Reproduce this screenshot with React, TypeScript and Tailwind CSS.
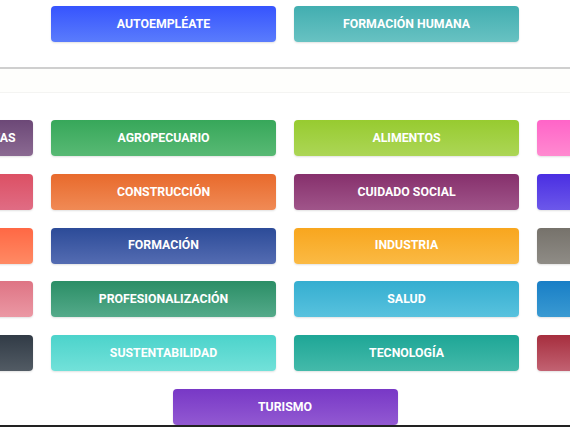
import React from "react";

type Btn = { label: string; from: string; to: string };

const Button = ({ b }: { b: Btn }) => (
  <div
    className="w-[225px] h-[36px] shrink-0 rounded-[4px] flex items-center justify-center text-white font-bold text-[12.3px] uppercase whitespace-nowrap shadow-[0_1px_2px_rgba(0,0,0,0.12)]"
    style={{ backgroundImage: `linear-gradient(to bottom, ${b.from}, ${b.to})` }}
  >
    {b.label}
  </div>
);

const rows: Btn[][] = [
  [
    { label: "ARTES E INDUSTRIAS CREATIVAS", from: "#6c4877", to: "#8b6a92" },
    { label: "AGROPECUARIO", from: "#37a75a", to: "#58b974" },
    { label: "ALIMENTOS", from: "#97cb30", to: "#acd656" },
    { label: "ARTESANÍAS", from: "#ff64c8", to: "#ff8ad0" },
  ],
  [
    { label: "COMERCIO", from: "#dc5064", to: "#e06c84" },
    { label: "CONSTRUCCIÓN", from: "#e86a2c", to: "#f08a55" },
    { label: "CUIDADO SOCIAL", from: "#86306c", to: "#a0558a" },
    { label: "DIGITAL", from: "#4a2ee2", to: "#6c58ea" },
  ],
  [
    { label: "EMPRENDIMIENTO", from: "#ff6844", to: "#ff8a64" },
    { label: "FORMACIÓN", from: "#2c4b98", to: "#546cb2" },
    { label: "INDUSTRIA", from: "#f8a61e", to: "#fbba44" },
    { label: "OFICIOS", from: "#76726b", to: "#8f8c86" },
  ],
  [
    { label: "IDIOMAS", from: "#de7484", to: "#eb98a4" },
    { label: "PROFESIONALIZACIÓN", from: "#2b8e66", to: "#54aa8a" },
    { label: "SALUD", from: "#35aed0", to: "#58c2de" },
    { label: "SERVICIOS", from: "#187ec6", to: "#3a9ad2" },
  ],
  [
    { label: "SEGURIDAD", from: "#313b46", to: "#525b64" },
    { label: "SUSTENTABILIDAD", from: "#4cd3cb", to: "#72e1d9" },
    { label: "TECNOLOGÍA", from: "#1ea696", to: "#44baaa" },
    { label: "TRANSPORTE", from: "#a62e3e", to: "#c26272" },
  ],
];

export default function App() {
  return (
    <div
      className="w-[570px] h-[427px] overflow-hidden bg-white flex flex-col"
      style={{ fontFamily: "Roboto, 'Liberation Sans', sans-serif" }}
    >
      <div className="flex justify-center gap-[18px] pt-[6px] h-[67px] shrink-0">
        <Button b={{ label: "AUTOEMPLÉATE", from: "#3654fe", to: "#5a7cfc" }} />
        <Button b={{ label: "FORMACIÓN HUMANA", from: "#42aeb0", to: "#68c2c2" }} />
      </div>
      <div className="h-[2px] shrink-0 bg-[#cfcfcf] shadow-[0_1px_1px_rgba(0,0,0,0.06)]" />
      <div className="h-[24px] shrink-0 bg-[#fefefc] border-b border-[#f4f4f2]" />
      <div className="flex justify-center pt-[27px] shrink-0">
        <div className="w-[954px] shrink-0 flex flex-wrap justify-center gap-x-[18px] gap-y-[17.8px]">
          {rows.flat().map((b) => (
            <Button key={b.label} b={b} />
          ))}
          <Button b={{ label: "TURISMO", from: "#7838c6", to: "#9259d2" }} />
        </div>
      </div>
      <div className="flex-1" />
      <div className="h-[2px] shrink-0 bg-[#222]" />
    </div>
  );
}
